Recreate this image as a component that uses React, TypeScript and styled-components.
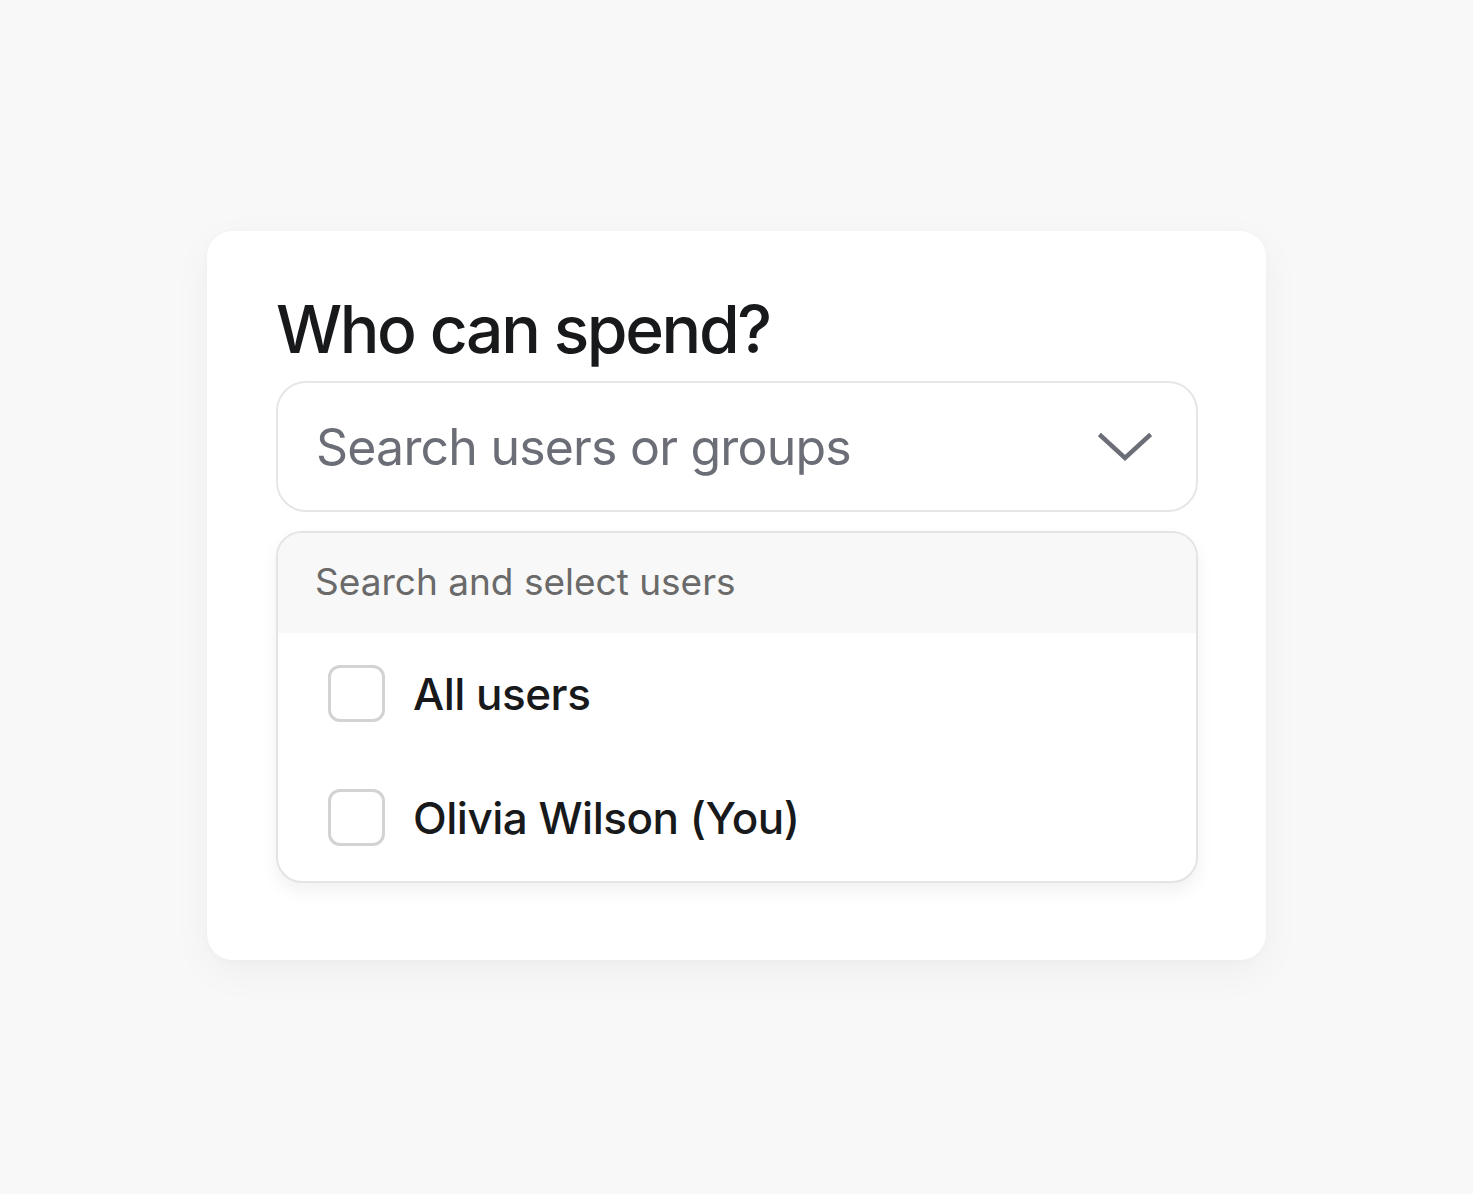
import React from 'react';
import styled, { createGlobalStyle } from 'styled-components';

const GlobalStyle = createGlobalStyle`
  html, body {
    margin: 0;
    padding: 0;
    background: #f8f8f8;
    font-family: Inter, "Noto Sans", sans-serif;
  }
`;

const users = ['All users', 'Olivia Wilson (You)'];

const Chevron = () => (
  <svg width="54" height="32" viewBox="0 0 54 32" fill="none">
    <path d="M3 5 L27 27 L51 5" stroke="#6b6e76" strokeWidth="4.5" strokeLinecap="square" strokeLinejoin="miter" />
  </svg>
);

const App = () => {
  return (
    <Page>
      <GlobalStyle />
      <Card>
        <Title>Who can spend?</Title>
        <SelectBox>
          <Placeholder>Search users or groups</Placeholder>
          <Chevron />
        </SelectBox>
        <Menu>
          <MenuHeader>Search and select users</MenuHeader>
          <MenuList>
            {users.map((name) => (
              <MenuItem key={name}>
                <Checkbox />
                <ItemLabel>{name}</ItemLabel>
              </MenuItem>
            ))}
          </MenuList>
        </Menu>
      </Card>
    </Page>
  );
};

export default App;

const Page = styled.div`
  box-sizing: border-box;
  display: flex;
  align-items: center;
  justify-content: center;
  width: 100%;
  height: 1194px;
  padding-bottom: 3px;
`;

const Card = styled.div`
  box-sizing: border-box;
  width: 1059px;
  height: 729px;
  padding: 58px 68px 0 69px;
  background: #ffffff;
  border-radius: 26px;
  box-shadow: 0 12px 40px rgba(0, 0, 0, 0.045), 0 2px 8px rgba(0, 0, 0, 0.02);
  display: flex;
  flex-direction: column;
`;

const Title = styled.h1`
  margin: 0 0 11px 0;
  font-size: 66px;
  line-height: 81px;
  font-weight: 500;
  letter-spacing: -2.4px;
  color: #18191b;
`;

const SelectBox = styled.div`
  box-sizing: border-box;
  height: 131px;
  display: flex;
  align-items: center;
  justify-content: space-between;
  padding: 0 44px 0 38px;
  border: 2px solid #e6e6e6;
  border-radius: 30px;
  background: #ffffff;
`;

const Placeholder = styled.span`
  font-size: 50px;
  font-weight: 400;
  color: #6b6e76;
  letter-spacing: -0.8px;
`;

const Menu = styled.div`
  box-sizing: border-box;
  margin-top: 19px;
  height: 352px;
  border: 2px solid #e4e4e4;
  border-radius: 26px;
  background: #ffffff;
  overflow: hidden;
  box-shadow: 0 8px 18px rgba(0, 0, 0, 0.06);
`;

const MenuHeader = styled.div`
  box-sizing: border-box;
  height: 100px;
  display: flex;
  align-items: center;
  padding: 0 0 4px 37px;
  background: #f8f8f8;
  font-size: 37px;
  color: #6a6a6a;
`;

const MenuList = styled.div`
  display: flex;
  flex-direction: column;
  gap: 67px;
  padding: 32px 0 0 50px;
`;

const MenuItem = styled.div`
  display: flex;
  align-items: center;
  gap: 28px;
`;

const Checkbox = styled.span`
  box-sizing: border-box;
  width: 57px;
  height: 57px;
  border: 3px solid #d3d3d3;
  border-radius: 12px;
  background: #ffffff;
`;

const ItemLabel = styled.span`
  font-size: 44px;
  font-weight: 500;
  color: #18191b;
  letter-spacing: -0.5px;
`;
